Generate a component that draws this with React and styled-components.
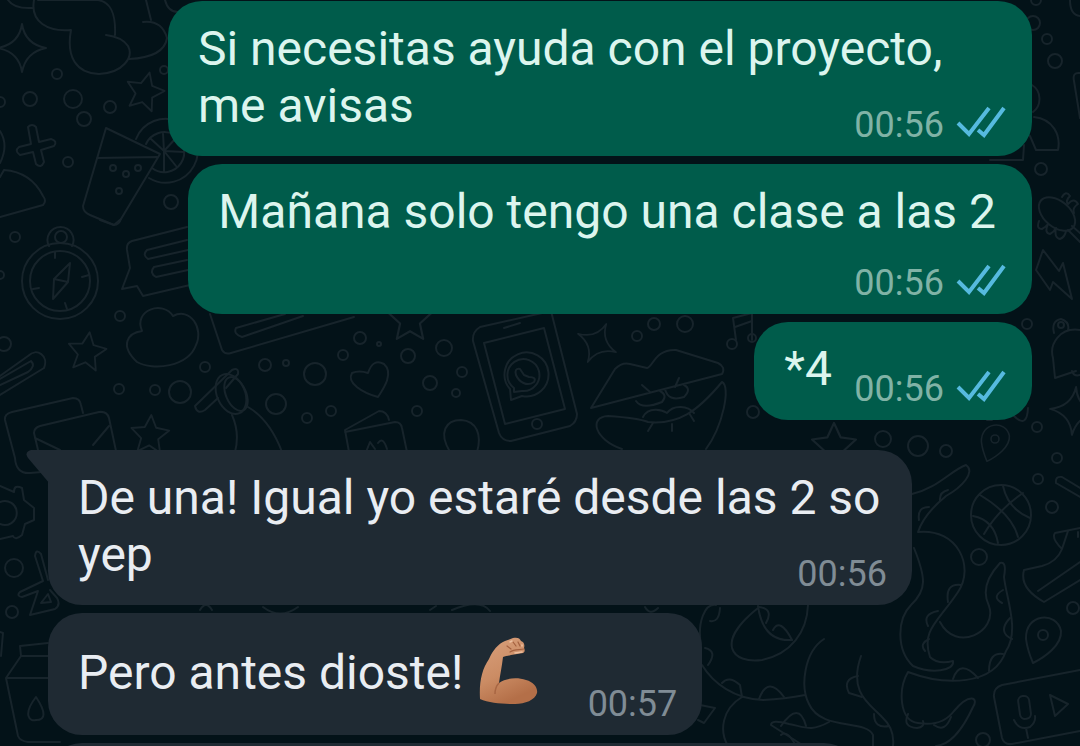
import React from 'react';
import styled, { createGlobalStyle } from 'styled-components';

const GlobalStyle = createGlobalStyle`
  * {
    box-sizing: border-box;
  }

  body {
    margin: 0;
    background-color: #031218;
    font-family: Roboto, sans-serif;
  }
`;

const Chat = styled.main`
  position: relative;
  height: 100vh;
  overflow: hidden;
`;

const Wallpaper = styled.svg`
  position: absolute;
  inset: 0;
  width: 100%;
  height: 100%;
  fill: none;
  stroke: #17242b;
  stroke-width: 2;
  stroke-linecap: round;
  stroke-linejoin: round;
`;

const Messages = styled.div`
  position: relative;
  display: flex;
  flex-direction: column;
  padding: 1px 48px 0;
`;

const Group = styled.section`
  display: flex;
  flex-direction: column;
  align-items: ${(props) => (props.$mine ? 'flex-end' : 'flex-start')};
  gap: 8px;
  margin-bottom: 30px;
`;

const Bubble = styled.article`
  position: relative;
  display: grid;
  max-width: 80vw;
  min-height: ${(props) => props.$minHeight || 98}px;
  padding-top: ${(props) => props.$top || 19}px;
  padding-right: ${(props) => (props.$mine ? 28 : 25)}px;
  padding-bottom: 9px;
  padding-left: 30px;
  border-radius: ${(props) => (props.$tail ? '0 34px 34px 34px' : '34px')};
  background-color: ${(props) => (props.$mine ? '#005c4b' : '#1f2a33')};
  color: ${(props) => (props.$mine ? '#dcf5ee' : '#e9edf2')};
`;

const Tail = styled.svg`
  position: absolute;
  top: 0;
  left: -22px;
  width: 24px;
  height: 34px;
  fill: #1f2a33;
`;

// text and time share one grid cell, the padding keeps them apart
const Text = styled.p`
  grid-area: 1 / 1;
  margin: 0;
  padding-right: ${(props) => props.$right || 0}px;
  padding-bottom: ${(props) => props.$bottom || 0}px;
  font-size: 48px;
  line-height: 57px;
`;

const Meta = styled.footer`
  grid-area: 1 / 1;
  align-self: end;
  justify-self: end;
  display: flex;
  align-items: center;
  gap: 12px;
  font-size: 36px;
  line-height: 44px;
  color: ${(props) => (props.$mine ? '#80b3a6' : '#808c95')};
`;

const Ticks = styled.svg`
  width: 48px;
  height: 30px;
  margin-bottom: 8px;
  overflow: visible;
  fill: none;
  stroke: #56badf;
  stroke-width: 4;
`;

const Arm = styled.svg`
  width: 60px;
  height: 68px;
  margin-left: 4px;
  vertical-align: -16px;
`;

const NextBubble = styled.div`
  width: 75vw;
  height: 98px;
  border-radius: 34px;
  background-color: #1f2a33;
`;

const DoubleCheck = () => (
  <Ticks viewBox="0 0 48 30" role="img" aria-label="Leído">
    <path d="M2 17 L13 28 L33 2" />
    <path d="M22 24 L28 29 L48 2" />
  </Ticks>
);

const Biceps = () => (
  <Arm viewBox="0 0 60 68" role="img" aria-label="💪🏽">
    <defs>
      <linearGradient id="skin" x1="0" y1="0" x2="0.4" y2="1">
        <stop offset="0" stopColor="#d9a07c" />
        <stop offset="0.6" stopColor="#cb8c64" />
        <stop offset="1" stopColor="#b46f48" />
      </linearGradient>
    </defs>
    <path
      fill="url(#skin)"
      d="M1 62 C0 45 3 32 10 22 C14 13 19 7 26 4 L34 1 C38 0 41 1 42 4 C45 5 46 8 45 11 C46 13 46 15 44 16 L32 18 C29 19 26 19 24 20 C23 29 21 38 20 46 C27 41 38 40 47 43 C55 45 59 51 58 56 C56 63 46 67 36 67 C24 67 10 66 1 62 Z"
    />
    <path
      fill="none"
      stroke="#a4613f"
      strokeWidth="1.2"
      strokeLinecap="round"
      d="M28 9 L32 12 M34 5 L37 9 M39 5 L41 9 M31 15 C35 12 40 13 45 12"
    />
    <path fill="none" stroke="#a86643" strokeWidth="1.5" d="M20 46 C17 49 16 53 16 57" />
    <path fill="none" stroke="#edc0a0" strokeWidth="1.6" strokeLinecap="round" d="M36 16 L43 15 M31 5 L33 4 M43 8 L43 9" />
  </Arm>
);

const dots = [
  [57, 74, 5], [30, 99, 7], [0, 102, 5], [73, 99, 9], [110, 107, 6], [84, 119, 7], [68, 162, 5], [171, 202, 7],
  [113, 168, 3], [126, 174, 3], [138, 168, 3], [119, 191, 3], [164, 70, 4], [15, 237, 5], [0, 275, 4], [4, 344, 7],
  [120, 316, 5], [205, 367, 5], [119, 389, 5], [155, 390, 5], [180, 392, 11], [265, 365, 6], [286, 363, 3],
  [315, 374, 11], [276, 404, 10], [307, 418, 5], [331, 411, 5], [343, 355, 5], [360, 338, 6], [379, 344, 2],
  [408, 356, 7], [444, 348, 8], [430, 383, 7], [462, 372, 5], [456, 393, 4], [417, 411, 5], [637, 336, 5],
  [654, 324, 6], [685, 324, 8], [753, 412, 6], [883, 439, 8], [918, 446, 10], [946, 451, 6], [1037, 427, 5],
  [1057, 458, 5], [1038, 479, 5], [1052, 507, 6], [979, 557, 8], [1073, 608, 6], [983, 740, 7], [1041, 169, 6],
  [1047, 39, 5], [1055, 61, 7], [1033, 23, 7], [1027, 324, 5], [14, 568, 9], [12, 612, 6], [1036, 0, 5],
];

const stars = [
  [145, 91, 19, 14], [87, 351, 19, 8], [150, 434, 19, 4], [410, 318, 22, 0], [834, 445, 22, 0],
];

const Star = ({ x, y, size, turn }) => (
  <path
    transform={`translate(${x} ${y}) rotate(${turn}) scale(${size / 20})`}
    d="M0 -20 L6 -7 L20 -5 L9 5 L12 19 L0 12 L-12 19 L-9 5 L-20 -5 L-6 -7 Z"
  />
);

const Sparkle = ({ x, y, size, turn }) => (
  <path
    transform={`translate(${x} ${y}) rotate(${turn}) scale(${size})`}
    d="M0 -24 Q3 -4 24 0 Q4 4 0 24 Q-3 4 -24 0 Q-3 -4 0 -24 Z"
  />
);

const Pin = ({ x, y, size }) => (
  <g transform={`translate(${x} ${y}) scale(${size})`}>
    <path d="M-17 4 C-18 -22 14 -24 18 -4 C19 10 2 22 -10 28 C-13 21 -16 12 -17 4 Z" />
    <circle r="5" />
  </g>
);

const Doodles = () => (
  <Wallpaper viewBox="0 0 1080 746" preserveAspectRatio="xMidYMid slice" aria-hidden="true">
    {dots.map(([x, y, r]) => (
      <circle key={`${x}-${y}`} cx={x} cy={y} r={r} />
    ))}
    {stars.map(([x, y, size, turn]) => (
      <Star key={`${x}-${y}`} x={x} y={y} size={size} turn={turn} />
    ))}
    <Sparkle x={22} y={48} size={1} turn={0} />
    <Sparkle x={597} y={343} size={0.88} turn={26} />
    <Sparkle x={1074} y={411} size={1} turn={5} />

    {/* clouds */}
    <path d="M8 0 Q14 9 32 8 M34 0 C30 22 48 32 71 30 C66 57 76 73 99 74 C123 73 134 57 128 46 Q122 37 106 35 M115 35 C116 12 110 2 98 0 H38 M129 59 C150 58 165 52 167 38 Q162 20 143 22 M151 20 L146 0 M165 0 Q168 12 178 12" />
    <path d="M142 331 C133 310 163 300 173 316 C190 307 204 328 196 345 C188 367 153 371 137 362 C119 345 128 333 142 331 Z" />

    {/* plus and dome */}
    <path d="M28 127 Q32 123 36 127 L39 142 L51 139 Q58 141 54 146 L41 150 L44 162 Q41 169 36 164 L33 152 L20 155 Q14 151 19 147 L31 144 Z" />
    <path d="M0 217 L43 205 Q47 201 43 196 Q31 172 4 170 M4 170 L0 177 M0 131 Q9 145 0 163" />

    {/* glass with a slice of lemon */}
    <path d="M106 128 L83 206 Q83 212 90 215 L114 225 Q119 225 121 219 L160 154 Z M97 158 L157 157 M136 139 A32 32 0 1 1 149 178 M146 144 A20 20 0 1 1 152 168 M164 151 L151 139 M164 151 L163 133 M164 151 L176 138 M164 151 L184 152 M164 151 L176 166 M164 151 L164 171" />

    {/* compass */}
    <circle cx="60" cy="281" r="38" />
    <circle cx="60" cy="281" r="30" />
    <path d="M49 246 A13 13 0 1 1 72 246 M55 252 V258 M89 275 L82 277 M33 289 L39 288 M67 309 L65 303 M70 263 L54 279 L53 299 L68 282 Z M54 279 L68 282" />
    <circle cx="61" cy="237" r="6" />

    {/* speech notes */}
    <path d="M187 227 L132 241 Q126 243 127 250 L130 268 L122 289 L137 286 L143 296 L190 285 M187 240 L147 250 Q142 255 148 259 L188 250 M187 260 L154 267 Q149 273 156 277 L188 270 M100 220 L114 225 L121 219" />
    <path d="M210 314 L222 350 Q225 355 231 353 L354 317 M303 316 L242 337 Q233 334 236 328 L285 314" />

    {/* paper clip and envelopes */}
    <path d="M0 376 L28 356 C37 347 49 356 44 368 L0 395 M0 385 L28 372 Q36 366 31 361 L0 379" />
    <path d="M15 458 L5 420 Q4 414 12 412 L73 398 Q80 398 81 405 L83 413 M38 450 L34 433 Q34 428 40 426 L99 412 Q107 411 109 418 L116 451 M35 438 L60 450 M109 426 L93 445 M15 458 Q16 474 30 473 L42 472" />

    {/* candle stick */}
    <path d="M195 406 L232 370 Q239 367 238 374 L226 388 M195 406 Q197 415 205 410 L218 398" />
    <ellipse cx="231" cy="394" rx="14" ry="21" transform="rotate(-24 231 394)" />
    <ellipse cx="236" cy="394" rx="10" ry="18" transform="rotate(-24 236 394)" />
    <path d="M232 415 Q240 433 235 452 M248 407 Q270 420 282 452" />

    {/* heart, box, balloon */}
    <path d="M378 397 C363 393 346 383 352 373 Q359 370 368 373 Q373 358 384 364 C394 373 384 388 378 397 Z" />
    <path d="M349 452 L345 430 L379 411 Q387 411 389 420 M345 432 L395 422 Q401 422 402 428 L407 452 M366 452 L370 442 L375 449 M378 443 Q383 436 387 449" />
    <path d="M450 452 C438 432 446 420 461 420 C477 421 482 435 477 452" />

    {/* phone */}
    <path d="M480 327 L551 311 L577 414 Q577 422 570 426 L511 441 Q502 441 499 433 L473 341 Q472 332 480 327 Z M484 343 L544 328 L565 409 L505 424 Z M504 328 L520 323" />
    <circle cx="537" cy="424" r="5" />
    <path d="M511 400 L510 389 A22 22 0 1 1 522 396 Z M514 388 A16 16 0 1 1 522 391 L514 392 Z" />
    <path d="M516 375 Q514 368 520 369 L524 375 L529 377 Q537 377 534 382 C527 387 519 382 516 375 Z" />

    {/* lips */}
    <path d="M591 408 L615 369 Q622 362 630 364 L647 368 C653 367 655 349 676 350 L718 363 Q726 367 722 374 L591 408 M636 401 Q642 410 662 402 Q668 395 660 391 M665 389 Q668 402 684 397 Q692 389 684 385 M642 385 L650 392 M679 378 L675 387" />
    <path d="M622 449 C595 440 588 417 608 416 Q638 418 648 422 C678 425 697 412 722 382 C731 386 723 426 706 449 M643 417 C649 405 664 411 667 413 C674 404 688 406 694 413 M648 431 L653 423 M672 431 V424 M694 421 L689 413" />

    {/* music */}
    <path d="M736 340 L733 318 L752 313 V340 M735 327 L752 321" />
    <circle cx="732" cy="344" r="5" />
    <circle cx="752" cy="338" r="4" />

    {/* person, bowl, brush and bolt */}
    <path d="M1070 0 Q1070 15 1080 16 M1032 85 A15 16 0 0 1 1033 112 M1034 117 C1053 119 1061 135 1058 150 H1036 L1030 136 M1080 73 Q1072 72 1074 81 L1080 118 M990 160 L1023 160 L1024 145" />
    <ellipse cx="1057" cy="214" rx="21" ry="13" transform="rotate(40 1057 214)" />
    <path d="M1062 197 q4 -7 8 -1 q-5 5 -2 8 q6 -7 10 0 q-6 4 -4 9 M1039 221 q-3 8 3 8 q4 -2 6 -5 q-4 9 2 10 q4 -2 6 -6 q-2 10 4 11 q5 -2 6 -8 M1068 230 L1080 242 M1072 226 L1080 233" />
    <path d="M1043 250 L1059 271 L1063 263 L1072 299 L1053 282 L1050 290 L1036 270 Z" />

    {/* bell */}
    <path d="M1054 333 Q1051 321 1061 319 Q1070 322 1068 330 M1080 330 C1060 327 1049 344 1053 358 L1055 378 L1076 371 M1072 371 Q1074 377 1080 375" />
    <circle cx="1061" cy="325" r="3" />
    <path d="M1014 416 Q1027 429 1028 408 M987 420 H992" />

    <Pin x={995} y={439} size={0.8} />
    <Pin x={1043} y={635} size={1} />

    {/* basketball */}
    <circle cx="1001" cy="515" r="30" />
    <path d="M980 495 Q1012 514 1018 537 M984 534 Q998 510 1023 493 M973 516 Q994 520 998 543 M1003 486 Q1008 509 1030 518" />

    {/* tentacles */}
    <path d="M912 494 C938 488 950 471 966 465 C976 472 962 487 946 496 Q924 514 918 532 C958 528 975 567 958 592 C938 622 921 630 930 657 Q938 665 953 661 C955 671 931 674 913 666 C896 650 897 619 911 605 C927 590 926 578 914 548" />
    <path d="M1000 563 C987 577 982 592 989 606 C998 632 956 653 940 622 M1000 563 Q1007 561 1004 577 C1006 597 1020 631 1006 651 C994 686 945 686 908 672 C898 689 899 721 918 723 Q942 727 954 711 C970 692 979 698 973 707 C961 733 948 745 936 746" />
    <path d="M961 585 Q945 583 948 602 M938 611 Q922 614 928 626 M929 639 Q919 644 925 651 M1003 590 Q991 597 1002 603 M1010 618 Q997 632 1012 639 M989 671 Q989 652 1003 654 M953 679 Q960 658 978 678 M908 714 Q902 727 917 728 Q925 727 923 721 M934 725 Q945 733 951 717 M919 520 Q917 507 929 507 M940 501 Q939 492 948 490" />
    <path d="M701 645 C697 622 705 603 716 605 M702 665 C713 683 734 699 763 700 Q785 699 805 695 M758 608 C714 643 732 664 762 660 C791 654 807 632 808 605 M758 606 Q763 642 792 640 M824 639 C804 652 800 687 809 704 C821 731 866 719 873 735 V746 M861 656 C848 693 870 704 882 717 Q895 729 893 746 M742 697 C722 709 719 731 728 746 M829 722 C811 732 805 727 789 724 Q771 719 771 725 L804 746" />
    <path d="M722 683 Q729 675 740 685 L742 697 M759 699 Q768 675 784 697 M781 726 Q799 700 806 726 M858 676 Q842 679 849 693 L862 697 M874 714 Q874 729 889 726 M773 630 Q780 617 792 640 M710 621 Q719 623 720 608 M759 607 Q774 609 766 623 M705 648 Q718 651 708 665 M781 735 Q787 729 796 746" />
    <path d="M700 705 L715 708 L704 723 L698 720 M200 610 Q206 600 212 610 M263 607 Q280 620 298 607 M430 610 L436 606 M452 610 Q480 598 490 611 M645 607 Q650 616 658 608" />

    {/* pencil and shoe */}
    <path d="M1080 488 L1062 477 Q1055 476 1056 483 L1080 497 M1080 528 L1055 533 Q1051 538 1062 549 L1068 531 M1062 549 Q1057 562 1042 566 L1024 570 Q1019 588 1044 602 L1080 580 M1038 591 L1080 562 M1078 532 v5" />

    {/* voice player */}
    <path d="M1080 670 L1002 685 Q993 688 994 697 L1002 738 Q1004 745 1012 744 L1080 731 M1050 695 L1068 704 L1055 716 Z M1014 720 Q1019 731 1030 727 Q1036 722 1035 716 M1026 728 L1028 738" />
    <rect x="1019" y="696" width="11" height="23" rx="5" transform="rotate(-8 1024 707)" />

    {/* gear */}
    <path d="M0 486 L14 492 Q14 484 22 488 L24 500 L34 508 V520 L25 524 L22 535 Q15 541 13 536 L0 539 M0 502 A12 12 0 1 1 0 524" />

    {/* set square and milk carton */}
    <path d="M48 580 L41 554 Q36 548 35 556 L43 581 L20 592 Q16 596 22 597 L38 591 L30 615 L55 609 Q61 605 57 598 L50 590 M41 603 L48 594 L51 602 Z M0 632 L3 633 L1 656 M48 643 L20 646 L21 656 H48 M21 656 L6 678 L18 736 Q20 741 28 742 H60 M6 678 H48 M36 697 C22 715 30 722 36 720 C46 720 46 712 36 697 Z" />
  </Wallpaper>
);

const App = () => {
  return (
    <>
      <GlobalStyle />
      <Chat>
        <Doodles />
        <Messages>
          <Group $mine>
            <Bubble $mine $minHeight={155}>
              <Text>Si necesitas ayuda con el proyecto, me avisas</Text>
              <Meta $mine>
                <time>00:56</time>
                <DoubleCheck />
              </Meta>
            </Bubble>
            <Bubble $mine $minHeight={150}>
              <Text $right={8} $bottom={44}>Mañana solo tengo una clase a las 2</Text>
              <Meta $mine>
                <time>00:56</time>
                <DoubleCheck />
              </Meta>
            </Bubble>
            <Bubble $mine $top={18}>
              <Text $right={172}>*4</Text>
              <Meta $mine>
                <time>00:56</time>
                <DoubleCheck />
              </Meta>
            </Bubble>
          </Group>
          <Group>
            <Bubble $tail $minHeight={155}>
              <Tail viewBox="0 0 24 34">
                <path d="M5 0 H24 V34 L2 8 Q-2 2 5 0 Z" />
              </Tail>
              <Text>De una! Igual yo estaré desde las 2 so yep</Text>
              <Meta>
                <time>00:56</time>
              </Meta>
            </Bubble>
            <Bubble $top={24} $minHeight={122}>
              <Text $right={138}>
                Pero antes dioste! <Biceps />
              </Text>
              <Meta>
                <time>00:57</time>
              </Meta>
            </Bubble>
            <NextBubble />
          </Group>
        </Messages>
      </Chat>
    </>
  );
};

export default App;
